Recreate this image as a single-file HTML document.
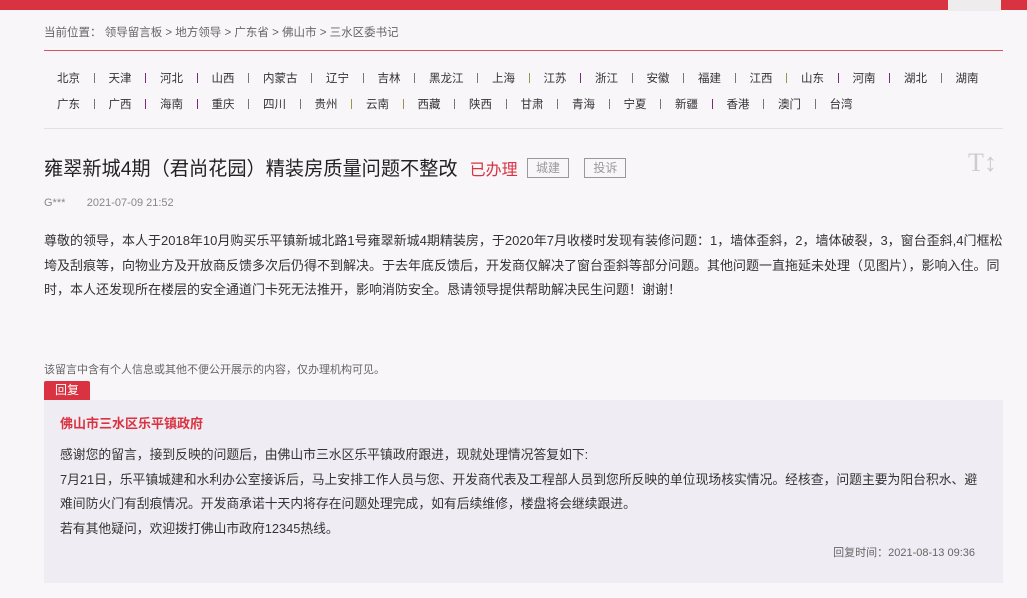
<!DOCTYPE html>
<html><head><meta charset="utf-8"><style>
*{margin:0;padding:0;box-sizing:border-box}
body{width:1027px;height:598px;background:#f8f6f9;font-family:"Liberation Sans","Noto Sans CJK SC",sans-serif;color:#333;position:relative;overflow:hidden}
.top{position:absolute;left:0;top:0;width:1027px;height:10px;background:#d93341}
.tab{position:absolute;left:948px;top:0;width:53px;height:11px;background:#eeeced}
.bc{position:absolute;left:44px;top:24px;font-size:11.5px;color:#666}
.rl{position:absolute;left:44px;top:50px;width:959px;height:1px;background:#d9535f}
.row{position:absolute;left:57px;font-size:11.5px;color:#333;display:flex;white-space:nowrap}
.row i{display:inline-block;width:1px;height:10px;background:#777;margin:3px 14px 0 13.5px}
.row i.p{background:#7a2a7a}.row i.o{background:#9a9450}
.gl{position:absolute;left:44px;top:128px;width:959px;height:1px;background:#e2e0e4}
.title{position:absolute;left:44px;top:153px;font-size:19.2px;color:#222;white-space:nowrap}
.st{color:#d93341;font-size:16px;margin-left:12px}
.tg{display:inline-block;border:1px solid #999;color:#999;font-size:12px;padding:0 8px;height:20px;line-height:18px;margin-left:4px;vertical-align:3px}
.tt{position:absolute;left:968px;top:148px;font-size:26px;color:#ccc;font-family:"Liberation Serif",serif}
.meta{position:absolute;left:44px;top:197px;font-size:11px;color:#888}
.body{position:absolute;left:44px;top:229px;width:965px;font-size:13px;line-height:24.5px;color:#333;white-space:nowrap}
.note{position:absolute;left:44px;top:361px;font-size:11px;color:#666}
.rt{position:absolute;left:44px;top:381px;width:46px;height:19px;background:#d93341;color:#fff;font-size:12px;text-align:center;line-height:19px;border-radius:2px 2px 0 0}
.rb{position:absolute;left:44px;top:400px;width:959px;height:183px;background:#efedf3}
.org{position:absolute;left:60px;top:413px;font-size:13px;font-weight:bold;color:#d93341}
.rtext{position:absolute;left:60px;top:443px;font-size:12.8px;line-height:24.5px;color:#333;white-space:nowrap}
.time{position:absolute;right:52px;top:544px;font-size:11px;color:#666}
</style></head><body>
<div class="top"></div><div class="tab"></div>
<div class="bc">当前位置： 领导留言板 &gt; 地方领导 &gt; 广东省 &gt; 佛山市 &gt; 三水区委书记</div>
<div class="rl"></div>
<div class="row" style="top:70px">北京<i></i>天津<i class="p"></i>河北<i class="p"></i>山西<i></i>内蒙古<i></i>辽宁<i></i>吉林<i></i>黑龙江<i></i>上海<i class="o"></i>江苏<i class="p"></i>浙江<i></i>安徽<i></i>福建<i></i>江西<i class="o"></i>山东<i class="p"></i>河南<i class="p"></i>湖北<i></i>湖南</div>
<div class="row" style="top:96px">广东<i></i>广西<i class="p"></i>海南<i class="p"></i>重庆<i></i>四川<i></i>贵州<i class="o"></i>云南<i class="o"></i>西藏<i></i>陕西<i></i>甘肃<i></i>青海<i></i>宁夏<i></i>新疆<i class="p"></i>香港<i></i>澳门<i></i>台湾</div>
<div class="gl"></div>
<div class="title">雍翠新城4期（君尚花园）精装房质量问题不整改<span class="st">已办理</span> <span class="tg">城建</span> <span class="tg" style="margin-left:10px">投诉</span></div>
<div class="tt">T↕</div>
<div class="meta">G***&nbsp;&nbsp;&nbsp;&nbsp;&nbsp;&nbsp;&nbsp;2021-07-09 21:52</div>
<div class="body">尊敬的领导，本人于2018年10月购买乐平镇新城北路1号雍翠新城4期精装房，于2020年7月收楼时发现有装修问题：1，墙体歪斜，2，墙体破裂，3，窗台歪斜,4门框松<br>垮及刮痕等，向物业方及开放商反馈多次后仍得不到解决。于去年底反馈后，开发商仅解决了窗台歪斜等部分问题。其他问题一直拖延未处理（见图片），影响入住。同<br>时，本人还发现所在楼层的安全通道门卡死无法推开，影响消防安全。恳请领导提供帮助解决民生问题！谢谢！</div>
<div class="note">该留言中含有个人信息或其他不便公开展示的内容，仅办理机构可见。</div>
<div class="rt">回复</div>
<div class="rb"></div>
<div class="org">佛山市三水区乐平镇政府</div>
<div class="rtext">感谢您的留言，接到反映的问题后，由佛山市三水区乐平镇政府跟进，现就处理情况答复如下:<br>7月21日，乐平镇城建和水利办公室接诉后，马上安排工作人员与您、开发商代表及工程部人员到您所反映的单位现场核实情况。经核查，问题主要为阳台积水、避<br>难间防火门有刮痕情况。开发商承诺十天内将存在问题处理完成，如有后续维修，楼盘将会继续跟进。<br>若有其他疑问，欢迎拨打佛山市政府12345热线。</div>
<div class="time">回复时间：2021-08-13 09:36</div>
</body></html>
